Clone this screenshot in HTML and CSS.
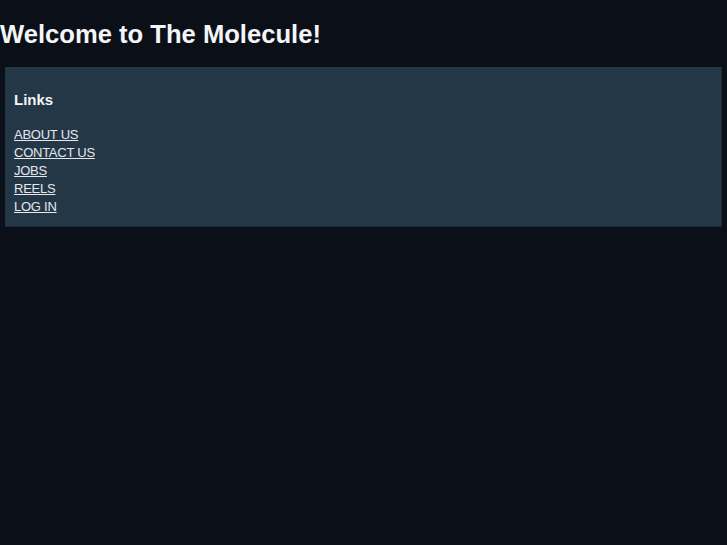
FILE: index.html
```html
<!DOCTYPE html>
<html>
<head>
<meta charset="utf-8">
<title>The Molecule</title>
<link rel="stylesheet" href="styles.css">
</head>
<body>
<h1 class="title">Welcome to The Molecule!</h1>
<div class="panel">
  <h2 class="panel-title">Links</h2>
  <ul class="links">
    <li><a href="#">ABOUT US</a></li>
    <li><a href="#">CONTACT US</a></li>
    <li><a href="#">JOBS</a></li>
    <li><a href="#">REELS</a></li>
    <li><a href="#">LOG IN</a></li>
  </ul>
</div>
</body>
</html>
```
FILE: styles.css
```css
html, body {
  margin: 0;
  padding: 0;
  background: #0b1018;
  color: #f2f4f6;
  font-family: "Liberation Sans", Arial, sans-serif;
}
.title {
  margin: 0;
  padding: 19px 0 0 0;
  font-size: 25.6px;
  line-height: 30px;
  font-weight: bold;
  color: #f4f5f7;
}
.panel {
  margin: 18px 5px 0 5px;
  padding: 24px 9px 10px;
  background: #243747;
  border-right: 1px solid #1c2a37;
  border-bottom: 1px solid #1c2a37;
}
.panel-title {
  margin: 0 0 17px;
  font-size: 15px;
  line-height: 18px;
  font-weight: bold;
  color: #f2f4f6;
}
.links {
  list-style: none;
  margin: 0;
  padding: 0;
}
.links li {
  font-size: 13px;
  line-height: 18px;
  letter-spacing: -0.25px;
}
.links a {
  color: #e4e8ec;
  text-decoration: underline;
}
```
